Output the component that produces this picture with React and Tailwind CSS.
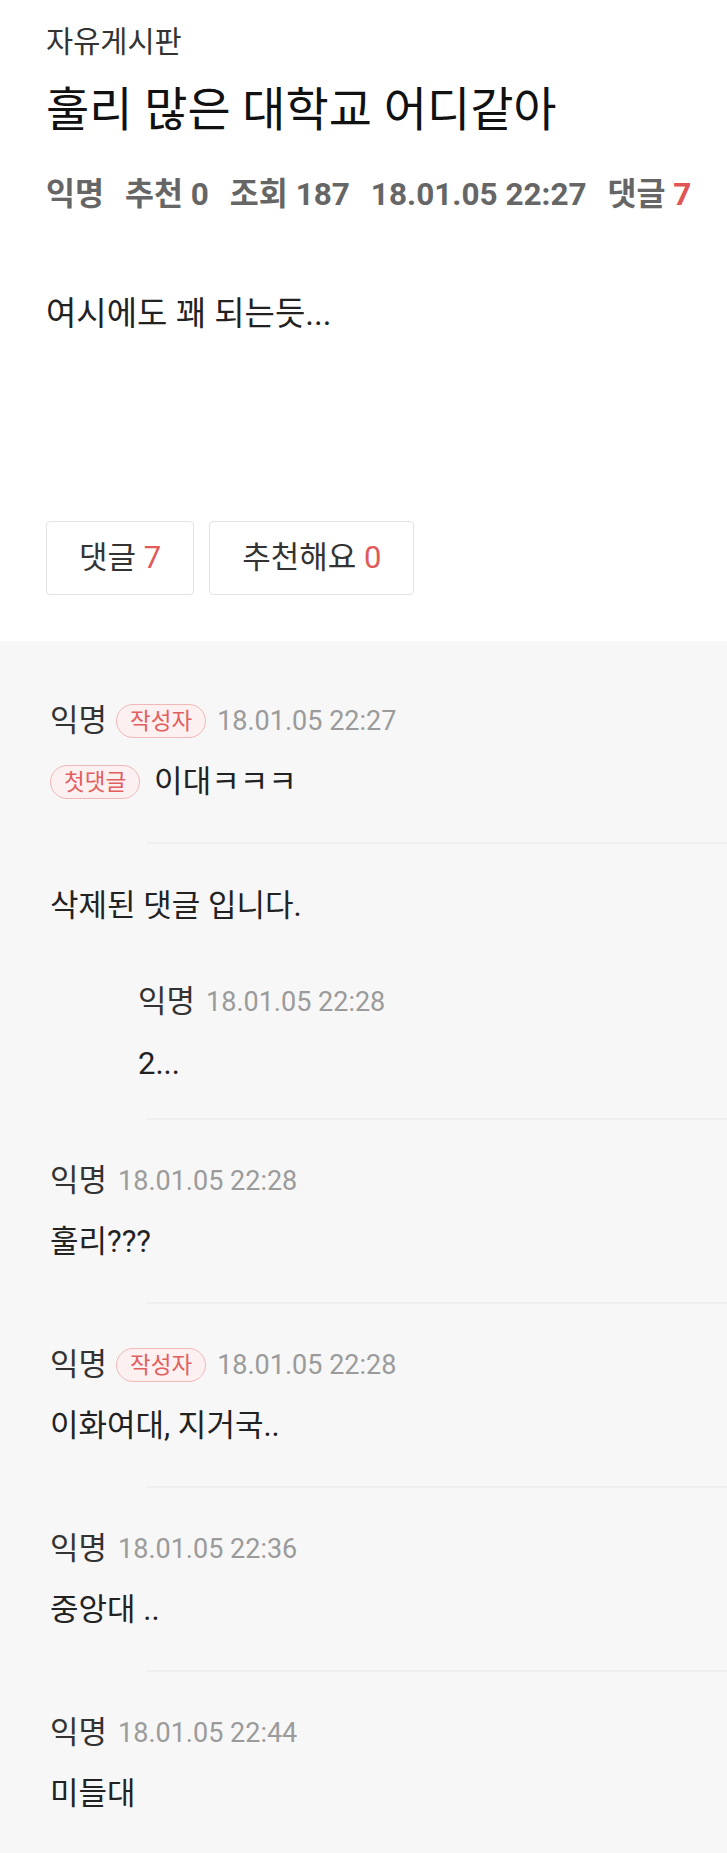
import React from "react";

const comments = [
  { id: 1, author: "익명", writer: true, date: "18.01.05 22:27", first: true, text: "이대ㅋㅋㅋ" },
  { id: 2, deleted: true, replies: [{ id: 21, author: "익명", date: "18.01.05 22:28", text: "2..." }] },
  { id: 3, author: "익명", date: "18.01.05 22:28", text: "훌리???" },
  { id: 4, author: "익명", writer: true, date: "18.01.05 22:28", text: "이화여대, 지거국.." },
  { id: 5, author: "익명", date: "18.01.05 22:36", text: "중앙대 .." },
  { id: 6, author: "익명", date: "18.01.05 22:44", text: "미들대" },
];

function Badge({ label }) {
  return (
    <span className="inline-flex items-center h-[34px] px-[13px] rounded-full border-[1.5px] border-[#f2b8b8] bg-[#fdf0f0] text-[#e25f5f] text-[22.5px] leading-none">
      {label}
    </span>
  );
}

function CommentHeader({ author, writer, date }) {
  return (
    <div className="flex items-center h-[40px] gap-[9px]">
      <span className="text-[31px] text-[#333]">{author}</span>
      {writer && <Badge label="작성자"/>}
      <span className="text-[27px] text-[#9b9b9b] ml-[2px]">{date}</span>
    </div>
  );
}

function Divider() {
  return <div className="ml-[147px] h-[2px] bg-[#efefef]"/>;
}

function Comment({ comment }) {
  // deleted comment keeps its replies underneath
  if (comment.deleted) {
    return (
      <div>
        <div className="pl-[50px] pt-[42px] h-[82px] flex items-end">
          <span className="text-[31px] leading-[40px] text-[#222]">삭제된 댓글 입니다.</span>
        </div>
        {comment.replies.map((reply) => (
          <div key={reply.id} className="pl-[138px] pt-[56px] pb-[34px]">
            <CommentHeader author={reply.author} date={reply.date}/>
            <div className="mt-[22px] h-[40px] flex items-center text-[31px] text-[#222]">
              {reply.text}
            </div>
          </div>
        ))}
        <Divider/>
      </div>
    );
  }

  return (
    <div>
      <div className="pl-[50px] pt-[41px] pb-[40px]">
        <CommentHeader author={comment.author} writer={comment.writer} date={comment.date}/>
        <div className="mt-[21px] h-[40px] flex items-center gap-[14px] text-[31px] text-[#222]">
          {comment.first && <Badge label="첫댓글"/>}
          <span>{comment.text}</span>
        </div>
      </div>
      <Divider/>
    </div>
  );
}

export default function App() {
  return (
    <div className="min-h-screen bg-[#f7f7f7] font-['Roboto','Noto_Sans_CJK_KR',sans-serif]">
      <div className="bg-white pl-[46px] pt-[22px] pb-[46px]">
        <div className="h-[40px] flex items-center text-[29.5px] text-[#333]">자유게시판</div>
        <h1 className="mt-[20px] h-[56px] flex items-center text-[47px] text-[#111]">
          훌리 많은 대학교 어디같아
        </h1>
        <div className="mt-[37px] h-[40px] flex items-center gap-[21px] text-[31.5px] font-bold text-[#666]">
          <span>익명</span>
          <span>추천 0</span>
          <span>조회 187</span>
          <span>18.01.05 22:27</span>
          <span>댓글 <span className="text-[#e05555]">7</span></span>
        </div>
        <p className="mt-[79px] h-[40px] flex items-center text-[33px] text-[#222]">
          여시에도 꽤 되는듯...
        </p>
        <div className="mt-[187px] flex gap-[15px]">
          <button className="h-[74px] px-[32px] border-[1.5px] border-[#e3e3e3] rounded-[4px] bg-white text-[31px] text-[#333]">
            댓글 <span className="text-[#e05a5a]">7</span>
          </button>
          <button className="h-[74px] px-[32px] border-[1.5px] border-[#e3e3e3] rounded-[4px] bg-white text-[31px] text-[#333]">
            추천해요 <span className="text-[#e05a5a]">0</span>
          </button>
        </div>
      </div>
      <div className="pt-[19px]">
        {comments.map((comment) => (
          <Comment key={comment.id} comment={comment}/>
        ))}
      </div>
    </div>
  );
}
